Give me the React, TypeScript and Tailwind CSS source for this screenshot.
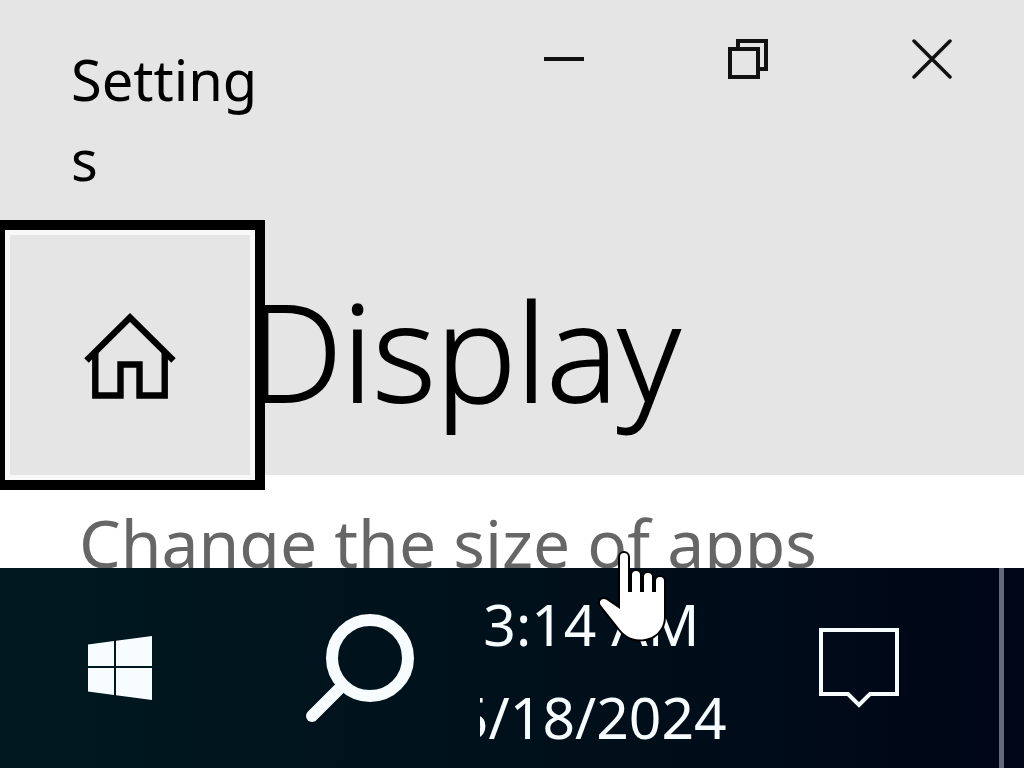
function WindowControls() {
  return (
    <div className="flex h-[118px] text-[#111]">
      <button type="button" aria-label="Minimize" className="flex w-[184px] items-center justify-center">
        <svg width="40" height="40" viewBox="0 0 40 40" fill="none" stroke="currentColor" strokeWidth="4">
          <path d="M0 20H40" />
        </svg>
      </button>
      <button type="button" aria-label="Restore" className="flex w-[184px] items-center justify-center">
        <svg width="40" height="40" viewBox="0 0 40 40" fill="none" stroke="currentColor" strokeWidth="4">
          <path d="M2 10H30V38H2Z" />
          <path d="M10 10V2H38V30H30" />
        </svg>
      </button>
      <button type="button" aria-label="Close" className="flex w-[184px] items-center justify-center">
        <svg width="40" height="40" viewBox="0 0 40 40" fill="none" stroke="currentColor" strokeWidth="3.500">
          <path d="M2 2L38 38M38 2L2 38" strokeLinecap="round" />
        </svg>
      </button>
    </div>
  );
}

function HomeButton() {
  return (
    <button
      type="button"
      aria-label="Home"
      className="z-10 -mb-[15px] -ml-[5px] flex h-[270px] w-[270px] shrink-0 items-center justify-center border-10 border-black bg-[#e5e5e5] shadow-[inset_0_0_0_5px_#f8f8f8]"
    >
      <svg width="96" height="96" viewBox="0 0 96 96" fill="none" stroke="#000" strokeWidth="6.4">
        <path d="M4.500 53.500L48 10.500L91.500 53.500" />
        <path d="M13.300 46V88.500H38.500V57.500H57.500V88.500H82.700V46" />
      </svg>
    </button>
  );
}

function Taskbar() {
  return (
    <footer className="flex h-[200px] shrink-0 bg-linear-to-r from-[#00191f] via-[#000f1a] via-60% to-[#000617] text-[#f7fcff]">
      <button type="button" aria-label="Start" className="flex w-60 items-center justify-center">
        <svg width="64" height="64" viewBox="0 0 64 64" fill="currentColor">
          <path d="M0 8.500L26 5V30H0ZM28 4.700L64 0V30H28ZM0 32H26V59L0 55.500ZM28 32H64V64L28 59.300Z" />
        </svg>
      </button>
      <button type="button" aria-label="Search" className="flex w-60 items-center justify-center">
        <svg width="108" height="108" viewBox="0 0 108 108" fill="none" stroke="currentColor" strokeWidth="12">
          <circle cx="64" cy="44" r="38" />
          <path d="M36 72L6 102" strokeLinecap="round" />
        </svg>
      </button>
      <button
        type="button"
        className="flex w-[280px] items-start overflow-hidden pt-[10px] text-[57px] leading-[93px] whitespace-nowrap"
      >
        <span className="-ml-6 block text-center">
          <span className="block">3:14 AM</span>
          <span className="block">5/18/2024</span>
        </span>
      </button>
      <button type="button" aria-label="Notifications" className="flex w-[198px] items-center justify-center">
        <svg width="80" height="80" viewBox="0 0 80 80" fill="none" stroke="currentColor" strokeWidth="4">
          <path d="M2 2H78V66H51L40 77L29 66H2Z" />
        </svg>
      </button>
      <button type="button" aria-label="Show desktop" className="ml-auto w-[25px] border-l-5 border-[#646879]" />
    </footer>
  );
}

function HandPointer() {
  return (
    <svg
      className="pointer-events-none absolute top-[549px] left-[596px] z-20"
      width="76"
      height="96"
      viewBox="0 0 76 96"
      fill="#fff"
      stroke="#000"
      strokeWidth="4"
      strokeLinejoin="round"
      paintOrder="stroke"
    >
      <path d="M24 60V8a4 4 0 0 1 8 0V43h4V26a4 4 0 0 1 8 0V43h4V28a4 4 0 0 1 8 0V43h4V32a4 4 0 0 1 8 0V68C68 81 58 90.500 44 90.500C34 90.500 27 85 22 78L5 56.500C2 52 6 48.500 10 50.500Z" />
    </svg>
  );
}

export default function App() {
  return (
    <div className="relative flex h-screen flex-col overflow-hidden bg-white font-['Noto_Sans','Open_Sans',sans-serif] text-black">
      <header className="shrink-0 bg-[#e5e5e5]">
        <div className="flex h-[220px] items-start justify-between">
          <div className="w-[270px] pt-[39px] pl-[71px] text-[56px] leading-[80px] break-all">Settings</div>
          <WindowControls />
        </div>
        <div className="flex h-[255px] items-start">
          <HomeButton />
          <h1 className="-ml-[18px] pt-[3px] font-['Open_Sans','Noto_Sans',sans-serif] text-[135px] leading-[255px] font-light [-webkit-text-stroke:2px_#000]">
            Display
          </h1>
        </div>
      </header>
      <main className="min-h-0 flex-1 overflow-hidden bg-white pt-[21px] pl-[79px]">
        <p className="text-[66px] leading-[92px] whitespace-nowrap text-[#666]">Change the size of apps</p>
      </main>
      <Taskbar />
      <HandPointer />
    </div>
  );
}
